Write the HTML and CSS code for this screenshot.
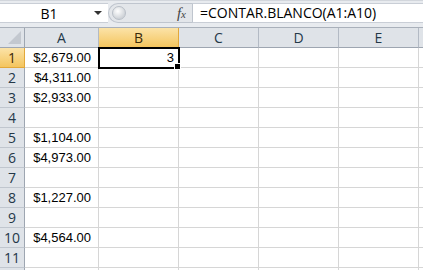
FILE: index.html
```html
<!DOCTYPE html>
<html lang="es">
<head>
  <meta charset="UTF-8" />
  <title>CONTAR.BLANCO</title>
  <link rel="stylesheet" href="styles.css">
</head>
<body>
  <div class="topbar">
    <div class="namebox">
      <span class="name">B1</span>
      <span class="arrow"></span>
    </div>
    <div class="fx-area">
      <span class="knob"></span>
      <span class="fx"><i>f</i><i class="x">x</i></span>
    </div>
    <div class="formula">=CONTAR.BLANCO(A1:A10)</div>
  </div>

  <div class="sheet">
    <div class="corner"><span class="tri"></span></div>
    <div class="colhead">A</div>
    <div class="colhead active">B</div>
    <div class="colhead">C</div>
    <div class="colhead">D</div>
    <div class="colhead">E</div>
    <div class="colhead rest"></div>

    <div class="rowhead active">1</div>
    <div class="cell num">$2,679.00</div>
    <div class="cell selected">3</div>
    <div class="cell"></div><div class="cell"></div><div class="cell"></div><div class="cell rest"></div>

    <div class="rowhead">2</div>
    <div class="cell num">$4,311.00</div>
    <div class="cell"></div><div class="cell"></div><div class="cell"></div><div class="cell"></div><div class="cell rest"></div>

    <div class="rowhead">3</div>
    <div class="cell num">$2,933.00</div>
    <div class="cell"></div><div class="cell"></div><div class="cell"></div><div class="cell"></div><div class="cell rest"></div>

    <div class="rowhead">4</div>
    <div class="cell"></div>
    <div class="cell"></div><div class="cell"></div><div class="cell"></div><div class="cell"></div><div class="cell rest"></div>

    <div class="rowhead">5</div>
    <div class="cell num">$1,104.00</div>
    <div class="cell"></div><div class="cell"></div><div class="cell"></div><div class="cell"></div><div class="cell rest"></div>

    <div class="rowhead">6</div>
    <div class="cell num">$4,973.00</div>
    <div class="cell"></div><div class="cell"></div><div class="cell"></div><div class="cell"></div><div class="cell rest"></div>

    <div class="rowhead">7</div>
    <div class="cell"></div>
    <div class="cell"></div><div class="cell"></div><div class="cell"></div><div class="cell"></div><div class="cell rest"></div>

    <div class="rowhead">8</div>
    <div class="cell num">$1,227.00</div>
    <div class="cell"></div><div class="cell"></div><div class="cell"></div><div class="cell"></div><div class="cell rest"></div>

    <div class="rowhead">9</div>
    <div class="cell"></div>
    <div class="cell"></div><div class="cell"></div><div class="cell"></div><div class="cell"></div><div class="cell rest"></div>

    <div class="rowhead">10</div>
    <div class="cell num">$4,564.00</div>
    <div class="cell"></div><div class="cell"></div><div class="cell"></div><div class="cell"></div><div class="cell rest"></div>

    <div class="rowhead">11</div>
    <div class="cell"></div>
    <div class="cell"></div><div class="cell"></div><div class="cell"></div><div class="cell"></div><div class="cell rest"></div>

    <div class="rowhead"></div>
    <div class="cell"></div>
    <div class="cell"></div><div class="cell"></div><div class="cell"></div><div class="cell"></div><div class="cell rest"></div>
  </div>
</body>
</html>
```

FILE: styles.css
```css
body {
  margin: 0;
  width: 423px;
  height: 270px;
  overflow: hidden;
  background: #fff;
  font-family: "Open Sans", "Liberation Sans", sans-serif;
  color: #000;
}

.topbar {
  display: flex;
  height: 20px;
  padding: 2px 0 4px;
  background: #e8ebef;
  border-top: 1px solid #d2d6dc;
  border-bottom: 1px solid #a9b0ba;
}

.namebox {
  width: 108px;
  display: flex;
  align-items: center;
  background: #fff;
  border-top: 1px solid #c9ced6;
  border-bottom: 1px solid #c9ced6;
  box-sizing: border-box;
}

.name {
  flex: 1;
  text-align: center;
  font-size: 14px;
  padding-left: 4px;
}

.arrow {
  width: 0;
  height: 0;
  margin-right: 6px;
  border-left: 4px solid transparent;
  border-right: 4px solid transparent;
  border-top: 4px solid #333;
}

.fx-area {
  width: 84px;
  display: flex;
  align-items: center;
  justify-content: space-between;
  background: #e3e6ea;
  border: 1px solid #bfc5ce;
  border-right: none;
  border-radius: 10px 0 0 10px;
  box-sizing: border-box;
}

.knob {
  width: 12px;
  height: 12px;
  margin-left: 3px;
  border-radius: 50%;
  background: radial-gradient(circle at 40% 35%, #fff, #cfd3d8 70%);
  border: 1px solid #b9bfc7;
}

.fx {
  margin-right: 6px;
  font-family: "Liberation Serif", serif;
  font-size: 15px;
  color: #444;
}

.fx .x {
  font-size: 11px;
}

.formula {
  flex: 1;
  background: #fff;
  font-size: 14px;
  line-height: 18px;
  padding-left: 7px;
  border-left: 1px solid #bfc5ce;
  border-top: 1px solid #c9ced6;
  border-bottom: 1px solid #c9ced6;
}

.sheet {
  display: grid;
  grid-template-columns: 25px 74px 80px 80px 80px 80px 1fr;
  grid-template-rows: 20px;
  grid-auto-rows: 20px;
  font-size: 14px;
}

.corner {
  position: relative;
  background: #dfe3e8;
  border-right: 1px solid #9ea6b1;
  border-bottom: 1px solid #9ea6b1;
  box-sizing: border-box;
}

.tri {
  position: absolute;
  right: 3px;
  bottom: 3px;
  width: 0;
  height: 0;
  border-left: 13px solid transparent;
  border-bottom: 13px solid #c3c8cf;
}

.colhead {
  background: #dfe3e8;
  border-right: 1px solid #b3bac4;
  border-bottom: 1px solid #9ea6b1;
  box-sizing: border-box;
  text-align: center;
  line-height: 19px;
  color: #243848;
}

.rowhead {
  background: #dfe3e8;
  border-right: 1px solid #9ea6b1;
  border-bottom: 1px solid #c0c6ce;
  box-sizing: border-box;
  text-align: center;
  line-height: 20px;
  color: #243848;
}

.colhead.active,
.rowhead.active {
  background: linear-gradient(#fbe3a8, #f4c55e);
  border-color: #e2a83a;
  color: #3b2a0a;
}

.cell {
  border-right: 1px solid #d6d6d6;
  border-bottom: 1px solid #d6d6d6;
  box-sizing: border-box;
  font-family: "Liberation Sans", sans-serif;
  font-size: 13px;
  line-height: 20px;
  padding: 0 3px;
}

.cell.num {
  text-align: right;
  padding-right: 7px;
}

.rest {
  border-right: none;
}

.cell.selected {
  position: relative;
  text-align: right;
  outline: 2px solid #000;
  outline-offset: -1px;
  padding-right: 4px;
}

.cell.selected::after {
  content: "";
  position: absolute;
  right: -3px;
  bottom: -3px;
  width: 5px;
  height: 5px;
  background: #000;
  border: 1px solid #fff;
}
```
